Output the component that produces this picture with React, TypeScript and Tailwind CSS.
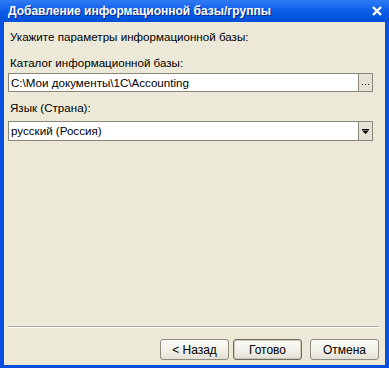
import React from 'react';

const font = { fontFamily: '"Liberation Sans", Arial, sans-serif' };

const Btn: React.FC<{ label: string; focused?: boolean; className?: string }> = ({ label, focused, className }) => (
  <button
    className={`w-[69px] h-[21px] text-[12px] text-black bg-gradient-to-b from-[#fbfbf8] via-[#f2f1ea] to-[#e3e1d5] rounded-[3px] flex items-center justify-center ${
      focused ? 'border border-[#6f6d64] shadow-[inset_0_0_0_1px_#c9c6b4]' : 'border border-[#8e8b7e]'
    } ${className ?? ''}`}
  >
    {label}
  </button>
);

export default function App() {
  return (
    <div className="w-[389px] h-[368px] bg-[#0a50e0] flex flex-col text-black" style={font}>
      {/* title bar */}
      <div className="h-[22px] flex items-center justify-between pl-[8px] pr-[7px] bg-gradient-to-b from-[#2f7bf5] via-[#0a5ce8] to-[#0550d8]">
        <span className="text-white font-bold text-[12px] [text-shadow:1px_1px_0_#0a2a8a]">
          Добавление информационной базы/группы
        </span>
        <svg width="10" height="10" viewBox="0 0 10 10" className="mb-[1px]">
          <path d="M1 1L9 9M9 1L1 9" stroke="white" strokeWidth="2.4" />
        </svg>
      </div>

      {/* body */}
      <div className="flex-1 bg-[#ece9d8] ml-[4px] mr-[4px] mb-[3px] flex flex-col pl-[4px] pr-[5px] text-[11.6px]">
        <div className="mt-[8px] leading-[14px] pl-[2px]">Укажите параметры информационной базы:</div>

        <div className="mt-[12px] leading-[14px] pl-[2px]">Каталог информационной базы:</div>
        <div className="mt-[3px] mr-[7px] flex h-[19px]">
          <div className="flex-1 bg-white border border-[#8b8778] flex items-center pl-[2px] leading-none">
            C:\Мои документы\1C\Accounting
          </div>
          <div className="w-[15px] -ml-px border border-[#8b8778] bg-[#e6e3d6] flex items-end justify-center pb-[5px]">
            <svg width="7" height="2" viewBox="0 0 7 2">
              <rect x="0" y="0" width="1" height="1" fill="#000" />
              <rect x="3" y="0" width="1" height="1" fill="#000" />
              <rect x="6" y="0" width="1" height="1" fill="#000" />
            </svg>
          </div>
        </div>

        <div className="mt-[9px] leading-[14px] pl-[2px]">Язык (Страна):</div>
        <div className="mt-[6px] mr-[7px] flex h-[20px]">
          <div className="flex-1 bg-white border border-[#8b8778] flex items-center pl-[2px] leading-none">
            русский (Россия)
          </div>
          <div className="w-[15px] -ml-px border border-[#8b8778] bg-[#e6e3d6] flex items-center justify-center">
            <svg width="7" height="5" viewBox="0 0 7 5">
              <rect x="0" y="0" width="7" height="1" fill="#000" />
              <path d="M0 1.5H7L3.5 5Z" fill="#000" />
            </svg>
          </div>
        </div>

        <div className="flex-1" />
        <div className="h-[2px] border-t border-[#a7a69a] border-b border-b-white mb-[11px] mr-[1px]" />
        <div className="flex justify-end pr-[1px] mb-[5px]">
          <Btn label="< Назад" />
          <Btn label="Готово" focused className="ml-[4px]" />
          <Btn label="Отмена" className="ml-[8px]" />
        </div>
      </div>
    </div>
  );
}
